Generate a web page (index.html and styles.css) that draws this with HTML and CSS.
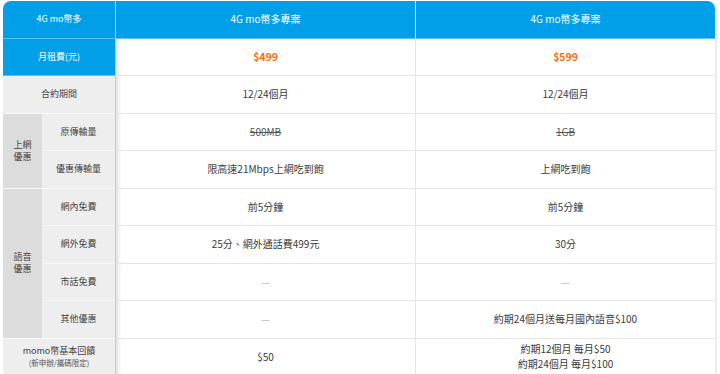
FILE: index.html
```html
<!DOCTYPE html>
<html lang="zh-Hant">
<head>
<meta charset="utf-8">
<link rel="stylesheet" href="styles.css">
</head>
<body>
<div class="wrap">
<table class="plans">
  <colgroup>
    <col class="c-group"><col class="c-sub"><col class="c-plan"><col class="c-plan">
  </colgroup>
  <tr class="head">
    <th colspan="2" class="lbl-blue tl">4G mo幣多</th>
    <th class="plan-h">4G mo幣多專案</th>
    <th class="plan-h tr">4G mo幣多專案</th>
  </tr>
  <tr>
    <th colspan="2" class="lbl-blue">月租費(元)</th>
    <td class="first price">$499</td>
    <td class="price">$599</td>
  </tr>
  <tr>
    <th colspan="2" class="lbl">合約期間</th>
    <td class="first">12/24個月</td>
    <td>12/24個月</td>
  </tr>
  <tr>
    <th rowspan="2" class="grp">上網<br>優惠</th>
    <th class="lbl">原傳輸量</th>
    <td class="first"><s>500MB</s></td>
    <td><s>1GB</s></td>
  </tr>
  <tr>
    <th class="lbl">優惠傳輸量</th>
    <td class="first">限高速21Mbps上網吃到飽</td>
    <td>上網吃到飽</td>
  </tr>
  <tr>
    <th rowspan="4" class="grp">語音<br>優惠</th>
    <th class="lbl">網內免費</th>
    <td class="first">前5分鐘</td>
    <td>前5分鐘</td>
  </tr>
  <tr>
    <th class="lbl">網外免費</th>
    <td class="first">25分、網外通話費499元</td>
    <td>30分</td>
  </tr>
  <tr>
    <th class="lbl">市話免費</th>
    <td class="first dash">—</td>
    <td class="dash">—</td>
  </tr>
  <tr>
    <th class="lbl">其他優惠</th>
    <td class="first dash">—</td>
    <td>約期24個月送每月國內語音$100</td>
  </tr>
  <tr class="last">
    <th colspan="2" class="lbl">momo幣基本回饋<br><span class="note">(新申辦/攜碼限定)</span></th>
    <td class="first">$50</td>
    <td><span class="ln">約期12個月 每月$50</span><span class="ln">約期24個月 每月$100</span></td>
  </tr>
</table>
</div>
</body>
</html>
```
FILE: styles.css
```css
html, body {
  margin: 0;
  padding: 0;
  background: #ffffff;
}
body {
  font-family: "Noto Sans CJK TC", "Noto Sans", sans-serif;
  color: #3a3a3a;
}
.wrap {
  padding: 1px 0 0 3px;
}
.plans {
  width: 713px;
  table-layout: fixed;
  border-collapse: separate;
  border-spacing: 0;
  border-right: 2px solid #ececec;
  border-top-right-radius: 8px;
  border-top-left-radius: 8px;
}
.c-group { width: 39px; }
.c-sub { width: 73px; }
.c-plan { width: 300px; }
tr { height: 37.5px; }
th, td {
  padding: 0;
  text-align: center;
  vertical-align: middle;
  font-weight: normal;
  line-height: 12px;
}
td {
  font-size: 10px;
  border-bottom: 1px solid #e6e6e6;
  border-left: 1px solid #e6e6e6;
  background: #ffffff;
}
td.first {
  border-left: 1px solid #c8c8c8;
  box-shadow: inset 5px 0 4px -3px rgba(0, 0, 0, 0.14);
}
.head th {
  border-bottom: 1px solid #5ec0ef;
}
.lbl-blue {
  background: #009fe8;
  color: #ffffff;
  font-size: 9px;
  border-bottom: 1px solid #5ec0ef;
}
.tl { border-top-left-radius: 8px; }
.tr { border-top-right-radius: 8px; }
.plan-h {
  background: #009fe8;
  color: #ffffff;
  font-size: 10px;
  border-left: 1px solid #e6e6e6;
}
.head .plan-h:nth-child(2) {
  border-left: 1px solid #c8c8c8;
}
.lbl {
  background: #eeeeee;
  font-size: 9px;
  color: #444444;
  border-bottom: 1px solid #f8f8f8;
}
.grp {
  background: #dcdcdc;
  font-size: 9px;
  color: #444444;
  border-bottom: 1px solid #f8f8f8;
  line-height: 12px;
}
.price {
  color: #ff6a00;
  font-weight: bold;
  font-size: 10.5px;
}
s {
  color: #555555;
}
.dash {
  color: #c0c0c0;
}
.note {
  font-size: 7.5px;
  color: #555555;
}
.last th {
  line-height: 12px;
}
.ln {
  display: block;
  line-height: 14.5px;
}
```
